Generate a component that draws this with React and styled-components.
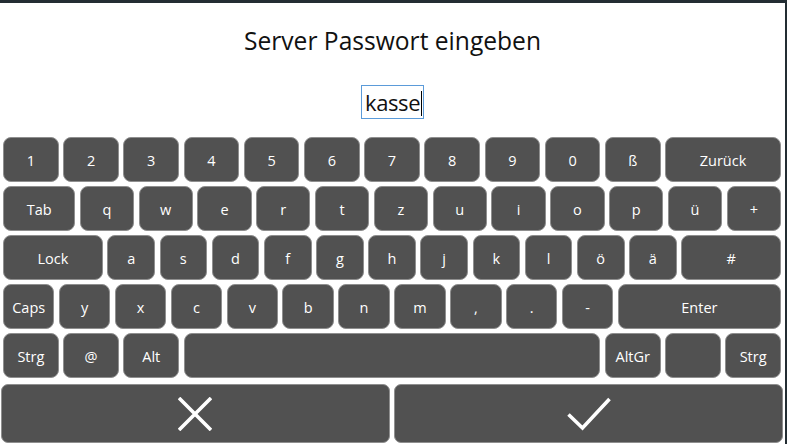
import React from "react";
import styled, { createGlobalStyle } from "styled-components";

const KEY_BG = "#515151";
const KEY_BORDER = "#8f8f8f";

const ROWS = [
  {
    columns: "repeat(13, 1fr)",
    keys: ["1", "2", "3", "4", "5", "6", "7", "8", "9", "0", "ß", { label: "Zurück", span: 2 }]
  },
  {
    columns: "1.33fr repeat(12, 1fr)",
    keys: ["Tab", "q", "w", "e", "r", "t", "z", "u", "i", "o", "p", "ü", "+"]
  },
  {
    columns: "repeat(15, 1fr)",
    keys: [
      { label: "Lock", span: 2 },
      "a", "s", "d", "f", "g", "h", "j", "k", "l", "ö", "ä",
      { label: "#", span: 2 }
    ]
  },
  {
    columns: "repeat(14, 1fr)",
    keys: ["Caps", "y", "x", "c", "v", "b", "n", "m", ",", ".", "-", { label: "Enter", span: 3 }]
  },
  {
    columns: "repeat(13, 1fr)",
    keys: ["Strg", "@", "Alt", { label: "", span: 7 }, "AltGr", "", "Strg"]
  }
];

const GlobalStyle = createGlobalStyle`
  html, body {
    margin: 0;
    padding: 0;
    background: #232d33;
  }
  body {
    font-family: "Open Sans", "Noto Sans", sans-serif;
  }
`;

const Frame = styled.div`
  width: 787px;
  height: 444px;
  box-sizing: border-box;
  padding: 3px 2px 0 0;
  background: #232d33;
  overflow: hidden;
`;

const Panel = styled.div`
  height: 100%;
  background: #fff;
  display: flex;
  flex-direction: column;
  align-items: center;
`;

const Title = styled.h1`
  margin: 22px 0 0;
  height: 32px;
  line-height: 32px;
  font-size: 24.6px;
  font-weight: 400;
  color: #111;
`;

const PasswordField = styled.div`
  margin-top: 28px;
  width: 63px;
  height: 34px;
  box-sizing: border-box;
  border: 1px solid #5b9bd9;
  display: flex;
  align-items: center;
  padding-left: 3px;
  font-size: 22px;
  color: #111;
  letter-spacing: -0.4px;
`;

const Caret = styled.span`
  display: inline-block;
  width: 1px;
  height: 25px;
  margin-left: 1px;
  margin-top: 3px;
  background: #000;
`;

const Keyboard = styled.div`
  align-self: stretch;
  margin-top: 18px;
  padding: 0 2px 0 1px;
  display: flex;
  flex-direction: column;
  gap: 4px;
`;

const KeyRow = styled.div`
  display: grid;
  grid-template-columns: ${p => p.$columns};
  gap: 4.5px;
  height: 45px;
  margin: 0 2px;
`;

const Key = styled.div`
  grid-column: span ${p => p.$span || 1};
  background: ${KEY_BG};
  border: 1px solid ${KEY_BORDER};
  border-radius: 8px;
  display: flex;
  align-items: center;
  justify-content: center;
  padding-top: 2px;
  color: #fff;
  font-size: 14.5px;
  box-sizing: border-box;
`;

const ActionRow = styled.div`
  display: grid;
  grid-template-columns: 1fr 1fr;
  gap: 4.7px;
  height: 59px;
  margin-top: 2px;
`;

const ActionKey = styled(Key)`
  border-radius: 7px;
  padding-top: 0;
`;

const CancelIcon = () => (
  <svg width="34" height="34" viewBox="0 0 34 34">
    <path d="M1 1 L33 33 M33 1 L1 33" stroke="#fff" strokeWidth="3.6" fill="none" />
  </svg>
);

const ConfirmIcon = () => (
  <svg width="44" height="34" viewBox="0 0 44 34">
    <polyline points="1.5,17.5 15.5,31 42.5,2" stroke="#fff" strokeWidth="3.6" fill="none" />
  </svg>
);

export default function App() {
  return (
    <Frame>
      <GlobalStyle />
      <Panel>
        <Title>Server Passwort eingeben</Title>
        <PasswordField>
          kasse
          <Caret />
        </PasswordField>
        <Keyboard>
          {ROWS.map((row, r) => (
            <KeyRow key={r} $columns={row.columns}>
              {row.keys.map((k, i) => {
                const key = typeof k === "string" ? { label: k } : k;
                return (
                  <Key key={i} $span={key.span}>
                    {key.label}
                  </Key>
                );
              })}
            </KeyRow>
          ))}
          <ActionRow>
            <ActionKey>
              <CancelIcon />
            </ActionKey>
            <ActionKey>
              <ConfirmIcon />
            </ActionKey>
          </ActionRow>
        </Keyboard>
      </Panel>
    </Frame>
  );
}
